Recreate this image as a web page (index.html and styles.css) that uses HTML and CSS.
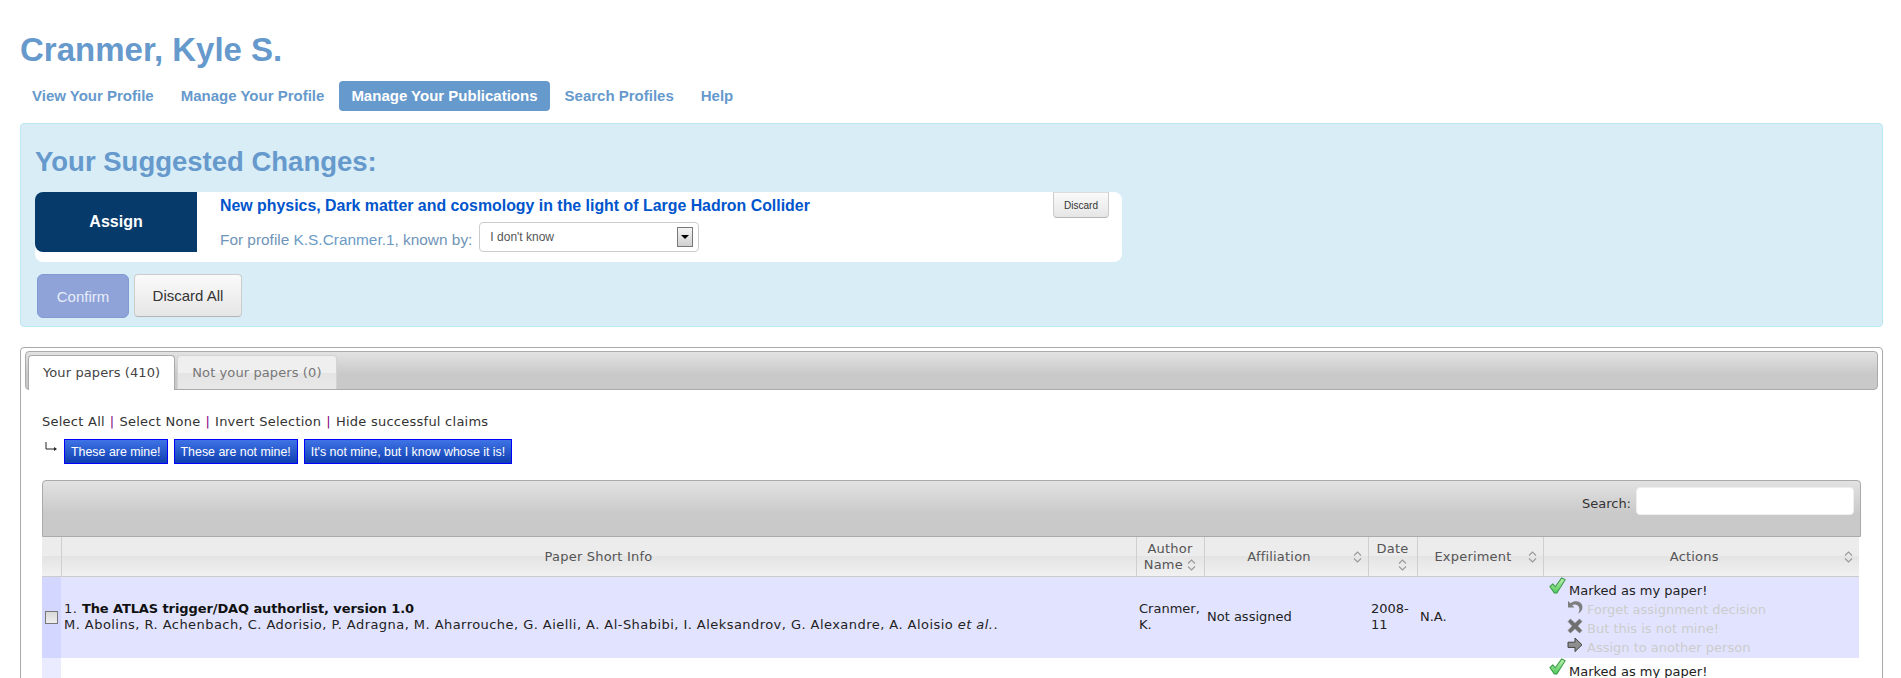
FILE: index.html
```html
<!DOCTYPE html>
<html>
  <head>
    <title>Cranmer, Kyle S.</title>
    <link rel="stylesheet" href="styles.css">
  </head>
  <body>
    <svg class="defs" width="0" height="0">
      <defs>
        <linearGradient id="green-fill" x1="0" y1="0" x2="0" y2="1">
          <stop offset="0" stop-color="#c2f2b4" />
          <stop offset="1" stop-color="#4ec95a" />
        </linearGradient>
        <symbol id="icon-check" viewBox="0 0 16 16">
          <path d="M0.8 9 3.6 6.4 5.8 9.2 12 0.8 15.2 2.6 7.4 15H5Z" fill="url(#green-fill)" stroke="#3c9a48" stroke-width="1" stroke-linejoin="round" />
        </symbol>
        <symbol id="icon-undo" viewBox="0 0 16 16">
          <path d="M1 2 1 8.5 7.5 8.5 5.2 6.2C8.6 4.4 13 6.6 12.4 11.2 12.2 12.6 11.6 13.8 10.8 15 14.4 13 16 10 15.2 6.6 14.2 2.6 8.8 0.6 3.6 4.2Z" fill="#7d7d7d" />
        </symbol>
        <symbol id="icon-cross" viewBox="0 0 16 16">
          <path d="M1 3.5 3.5 1 8 5.2 12.5 1 15 3.5 10.8 8 15 12.5 12.5 15 8 10.8 3.5 15 1 12.5 5.2 8Z" fill="#6f6f6f" stroke="#8a8a8a" stroke-width="0.6" />
        </symbol>
        <symbol id="icon-arrow" viewBox="0 0 16 16">
          <path d="M1 5.2H8V1L15 7.8 8 14.6V10.4H1Z" fill="#8f8f8f" stroke="#444" stroke-width="1" stroke-linejoin="round" />
        </symbol>
        <symbol id="icon-sort" viewBox="0 0 9 12">
          <path d="M1 4.5 4.5 1 8 4.5M1 7.5 4.5 11 8 7.5" fill="none" stroke="#999" stroke-width="1.1" />
        </symbol>
      </defs>
    </svg>

    <h1 class="name">Cranmer, Kyle S.</h1>

    <ul class="nav">
      <li><a href="#">View Your Profile</a></li>
      <li><a href="#">Manage Your Profile</a></li>
      <li class="active"><a href="#">Manage Your Publications</a></li>
      <li><a href="#">Search Profiles</a></li>
      <li><a href="#">Help</a></li>
    </ul>

    <div class="changes">
      <h2>Your Suggested Changes:</h2>
      <div class="change-card">
        <div class="change-type">Assign</div>
        <div class="change-info">
          <a class="change-title" href="#">New physics, Dark matter and cosmology in the light of Large Hadron Collider</a>
          <div class="change-profile">
            <span class="known-by">For profile <a href="#">K.S.Cranmer.1</a>, known by:</span>
            <div class="fake-select">
              <span>I don't know</span>
              <span class="fake-arrow"></span>
            </div>
          </div>
        </div>
        <button class="btn btn-small">Discard</button>
      </div>
      <div class="change-actions">
        <button class="btn btn-confirm">Confirm</button>
        <button class="btn btn-discard">Discard All</button>
      </div>
    </div>

    <div class="panel">
      <ul class="tabs">
        <li class="tab current">Your papers (410)</li>
        <li class="tab">Not your papers (0)</li>
      </ul>

      <div class="tab-body">
        <div class="selectors">
          <a href="#">Select All</a><span class="sep">|</span><a href="#">Select None</a><span class="sep">|</span><a href="#">Invert Selection</a><span class="sep">|</span><a href="#">Hide successful claims</a>
        </div>

        <div class="bulk">
          <svg class="bulk-arrow" width="12" height="10" viewBox="0 0 12 10">
            <path d="M1 0V7H9" fill="none" stroke="#222" stroke-width="1" />
            <path d="M9 5 12 7 9 9Z" fill="#222" />
          </svg>
          <button class="btn-blue">These are mine!</button>
          <button class="btn-blue">These are not mine!</button>
          <button class="btn-blue">It's not mine, but I know whose it is!</button>
        </div>

        <div class="toolbar">
          <label for="search">Search:</label>
          <input id="search" autocomplete="off" />
        </div>

        <table class="papers">
          <colgroup>
            <col class="c-check" /><col class="c-info" /><col class="c-author" /><col class="c-aff" /><col class="c-date" /><col class="c-exp" /><col class="c-act" />
          </colgroup>
          <thead>
            <tr>
              <th></th>
              <th>Paper Short Info</th>
              <th class="wrap">Author<br />Name <svg class="sort-inline"><use href="#icon-sort" /></svg></th>
              <th class="sortable">Affiliation<svg class="sort"><use href="#icon-sort" /></svg></th>
              <th class="wrap">Date<br /><svg class="sort-inline sort-date"><use href="#icon-sort" /></svg></th>
              <th class="sortable">Experiment<svg class="sort"><use href="#icon-sort" /></svg></th>
              <th class="sortable">Actions<svg class="sort"><use href="#icon-sort" /></svg></th>
            </tr>
          </thead>
          <tbody>
            <tr class="odd">
              <td class="check"><span class="fake-check"></span></td>
              <td class="info">1. <b>The ATLAS trigger/DAQ authorlist, version 1.0</b><br />M. Abolins, R. Achenbach, C. Adorisio, P. Adragna, M. Aharrouche, G. Aielli, A. Al-Shabibi, I. Aleksandrov, G. Alexandre, A. Aloisio <i>et al.</i>.</td>
              <td>Cranmer, K.</td>
              <td>Not assigned</td>
              <td>2008-11</td>
              <td>N.A.</td>
              <td class="actions">
                <div class="mark"><svg class="ic"><use href="#icon-check" /></svg>Marked as my paper!</div>
                <div class="act"><svg class="ic"><use href="#icon-undo" /></svg>Forget assignment decision</div>
                <div class="act"><svg class="ic"><use href="#icon-cross" /></svg>But this is not mine!</div>
                <div class="act"><svg class="ic"><use href="#icon-arrow" /></svg>Assign to another person</div>
              </td>
            </tr>
            <tr class="even">
              <td class="check"></td>
              <td></td>
              <td></td>
              <td></td>
              <td></td>
              <td></td>
              <td class="actions">
                <div class="mark"><svg class="ic"><use href="#icon-check" /></svg>Marked as my paper!</div>
              </td>
            </tr>
          </tbody>
        </table>
      </div>
    </div>
  </body>
</html>
```

FILE: styles.css
```css
html { height: 100%; overflow: hidden; }
body { margin: 0; padding: 0 18px 0 20px; height: 100%; box-sizing: border-box; background: #fff; font-family: "Liberation Sans", Arial, sans-serif; font-size: 14px; color: #333; }
a { text-decoration: none; }
.defs { display: block; height: 0; }

.name { margin: 0; padding-top: 29px; height: 41px; font-size: 33px; line-height: 41px; font-weight: bold; color: #6699cc; box-sizing: content-box; }

.nav { list-style-type: none; display: flex; gap: 3px; margin: 11px 0 12px; padding: 0; }
.nav a { display: block; padding: 0 12px; height: 30px; line-height: 30px; border-radius: 4px; font-size: 15px; font-weight: bold; color: #6699cc; }
.nav .active a { background: #6699cc; color: #fff; }

.changes { background: #d9edf7; border: 1px solid #bce8f1; border-radius: 4px; height: 204px; box-sizing: border-box; padding: 0 14px; }
.changes h2 { margin: 0; padding: 20px 0 12px; height: 36px; line-height: 36px; font-size: 27.5px; font-weight: bold; color: #6699cc; box-sizing: content-box; }

.change-card { display: flex; width: 1087px; height: 70px; background: #fff; border-radius: 8px; }
.change-type { width: 162px; height: 60px; line-height: 60px; flex-shrink: 0; text-align: center; background: #063a6b; border-radius: 8px 0 0 8px; color: #fff; font-weight: bold; font-size: 16px; }
.change-info { flex-grow: 1; padding: 5px 0 0 23px; }
.change-title { display: block; height: 18px; line-height: 18px; font-size: 15.9px; font-weight: bold; color: #0055cc; }
.change-profile { display: flex; align-items: center; gap: 7px; margin-top: 7px; font-size: 15.4px; color: #6f94b8; }
.change-profile a { color: #6c9bc6; }
.known-by { padding-top: 5px; }
.fake-select { display: flex; align-items: center; justify-content: space-between; width: 220px; height: 30px; box-sizing: border-box; padding: 0 5px 0 10px; background: #fff; border: 1px solid #ccc; border-radius: 4px; font-size: 12px; color: #555; }
.fake-arrow { display: block; position: relative; width: 16px; height: 20px; box-sizing: border-box; border: 1px solid #777; background: linear-gradient(#f4f4f4, #d0d0d0); }
.fake-arrow::after { content: ""; position: absolute; left: 3px; top: 7px; border-style: solid; border-width: 4px 4px 0; border-color: #000 transparent transparent; }

.btn { border: 1px solid #ccc; border-bottom-color: #b5b5b5; background: linear-gradient(#fafafa, #e6e6e6); border-radius: 4px; color: #333; font-family: "Liberation Sans", Arial, sans-serif; padding: 0; }
.btn-small { width: 56px; height: 26px; margin-right: 13px; flex-shrink: 0; font-size: 10px; border-radius: 0 0 4px 4px; border-top-color: #ddd; }
.change-actions { display: flex; gap: 5px; margin: 12px 0 0 2px; }
.btn-confirm { width: 92px; height: 44px; background: #8fa3d9; border-color: #8399d2; color: #e8edf8; font-size: 15px; border-radius: 6px; }
.btn-discard { width: 108px; height: 43px; font-size: 15px; }

.panel { margin-top: 20px; border: 1px solid #aaa; border-radius: 4px; padding: 3px 4px; height: 600px; box-sizing: border-box; }

.tabs { list-style-type: none; display: flex; gap: 2px; margin: 0; padding: 3px 0 0 2px; height: 34px; box-sizing: content-box; background: linear-gradient(#e2e2e2, #c9c9c9 60%); border: 1px solid #aaa; border-radius: 4px; font-family: "DejaVu Sans", Verdana, sans-serif; font-size: 13px; letter-spacing: 0.1px; }
.tab { height: 34px; line-height: 33px; padding: 0 14px; box-sizing: border-box; border: 1px solid #d3d3d3; border-bottom: none; border-radius: 4px 4px 0 0; background: linear-gradient(#efefef 50%, #e4e4e4 50%, #e8e8e8); color: #777; }
.tab.current { background: #fff; color: #444; border-color: #aaa; height: 35px; }

.tab-body { padding: 0 17px; font-family: "DejaVu Sans", Verdana, sans-serif; font-size: 13px; color: #222; }

.selectors { margin-top: 24px; height: 16px; line-height: 16px; letter-spacing: 0.25px; }
.selectors a { color: #333; }
.sep { color: #800080; margin: 0 5px; }

.bulk { display: flex; gap: 6px; margin-top: 9px; }
.bulk-arrow { margin: 3px 1px 0 3px; }
.btn-blue { height: 25px; padding: 0 6px; border: 1px solid #0000ff; background: linear-gradient(#3f74e6, #0f3fb0); color: #fff; font-family: "Liberation Sans", Arial, sans-serif; font-size: 12.4px; }

.toolbar { display: flex; align-items: center; justify-content: flex-end; gap: 5px; margin-top: 16px; height: 57px; box-sizing: border-box; padding: 0 6px 16px 0; background: linear-gradient(#e2e2e2, #c9c9c9 60%); border: 1px solid #aaa; border-radius: 4px 4px 0 0; color: #333; }
.toolbar label { padding-top: 6px; }
.toolbar input { width: 218px; height: 28px; box-sizing: border-box; border: 1px solid #eeeeee; border-radius: 4px; background: #fff; padding: 0 4px; }

.papers { width: 1817px; table-layout: fixed; border-collapse: collapse; }
.c-check { width: 19px; }
.c-info { width: 1075px; }
.c-author { width: 68px; }
.c-aff { width: 164px; }
.c-date { width: 49px; }
.c-exp { width: 126px; }
.c-act { width: 316px; }

.papers th { position: relative; height: 39px; padding: 2px 2px 0; box-sizing: border-box; font-weight: normal; color: #555; line-height: 16px; letter-spacing: 0.2px; background: linear-gradient(#ececec 50%, #e4e4e4 50%, #f1f1f1); border-right: 1px solid #cfcfcf; border-bottom: 1px solid #ccc; }
.papers th:last-child { border-right: none; }
.papers th.sortable { padding-right: 16px; }
.sort { position: absolute; right: 6px; top: 14px; width: 9px; height: 12px; }
.sort-inline { width: 9px; height: 12px; vertical-align: -2px; }
.sort-date { position: relative; left: 10px; }
.wrap { text-align: center; }

.papers td { padding: 0 3px; box-sizing: border-box; line-height: 16px; color: #222; vertical-align: middle; }
.odd td { height: 82px; background: #e2e4ff; }
.odd td.check { padding: 0; background: #d3d6ff; }
.even td { height: 82px; background: #fff; vertical-align: top; padding-top: 3px; }
.even td.check { background: #eaebff; }
.check { text-align: center; }
.fake-check { display: inline-block; width: 13px; height: 13px; box-sizing: border-box; border: 1px solid #777; background: linear-gradient(#d8d8d8, #eeeeee); vertical-align: middle; }
.papers td.info { padding-left: 3px; line-height: 16px; letter-spacing: 0.45px; }
.papers b { color: #111; letter-spacing: -0.1px; }

.papers td.actions { padding-left: 6px; vertical-align: top; padding-top: 3px; }
.mark, .act { display: flex; align-items: flex-end; height: 19px; line-height: 16px; white-space: nowrap; }
.mark .ic { width: 17px; height: 17px; margin-right: 3px; margin-bottom: 5px; }
.act { padding-left: 18px; color: #ccc; }
.act .ic { margin-right: 4px; margin-bottom: 3px; }
.ic { width: 16px; height: 16px; flex-shrink: 0; }
```
